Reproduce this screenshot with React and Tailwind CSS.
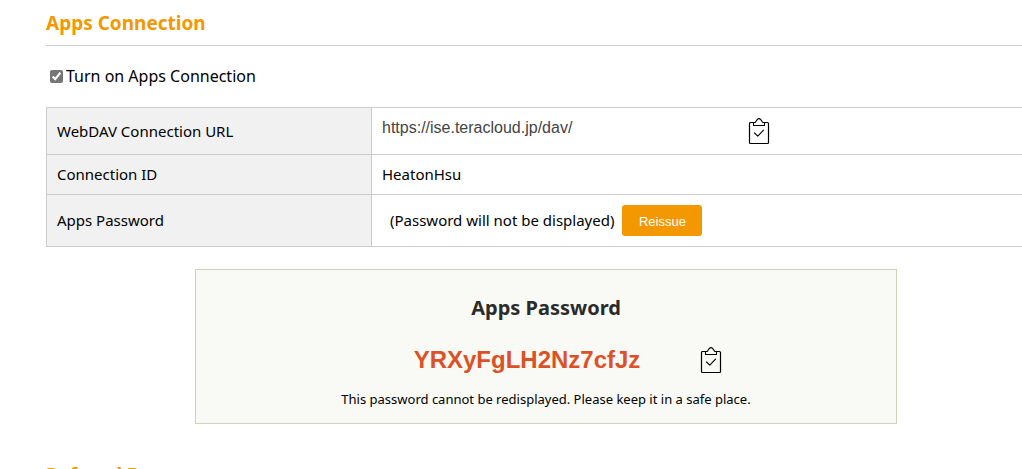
import { useState } from 'react';

function ClipboardIcon() {
  return (
    <svg width="22" height="28" viewBox="0 0 22 28" fill="none" stroke="#000" strokeLinejoin="round" strokeLinecap="round" aria-hidden="true">
      <path d="M5.5 5.5H2.5a1 1 0 0 0-1 1v19a1 1 0 0 0 1 1h17a1 1 0 0 0 1-1v-19a1 1 0 0 0-1-1h-3" strokeWidth="1.2" />
      <path d="M5.5 5.5v3h11v-3h-1.700L12.600 2.400C11.600 1.300 10.400 1.300 9.400 2.400L7.200 5.500z" strokeWidth="1.100" />
      <path d="M6.500 16l3.300 3.200 5.700-6" strokeWidth="1.100" />
    </svg>
  );
}

function CopyButton({ label, value }) {
  return (
    <button type="button" aria-label={label} className="shrink-0 cursor-pointer" onClick={() => navigator.clipboard?.writeText(value)}>
      <ClipboardIcon />
    </button>
  );
}

function SectionTitle({ children }) {
  return <h2 className="border-b border-[#ccc] pb-2 text-[19px] leading-7 font-bold text-[#f39800]">{children}</h2>;
}

function Row({ label, children, className }) {
  return (
    <tr className={className}>
      <th scope="row" className="w-[325px] border border-[#ccc] bg-[#f1f1f1] px-2.5 text-left font-normal">{label}</th>
      <td className="border border-[#ccc] px-2.5">{children}</td>
    </tr>
  );
}

export default function App() {
  const [enabled, setEnabled] = useState(true);
  const url = 'https://ise.teracloud.jp/dav/';
  const password = 'YRXyFgLH2Nz7cfJz';

  return (
    <main className="h-screen overflow-hidden bg-white font-['Noto_Sans','Open_Sans',sans-serif] text-[15px] text-black">
      <div className="-mr-6 ml-[46px] pt-[9px]">
        <SectionTitle>Apps Connection</SectionTitle>

        <label className="mt-[18px] flex h-6 items-center gap-[3px] pl-1 text-base">
          <input type="checkbox" checked={enabled} onChange={(e) => setEnabled(e.target.checked)} className="size-[13px] accent-[#767676]" />
          Turn on Apps Connection
        </label>

        <table className="mt-[19px] w-full border-collapse">
          <tbody>
            <Row label="WebDAV Connection URL" className="h-[47px]">
              <div className="flex items-center">
                <input
                  readOnly
                  aria-label="WebDAV Connection URL"
                  value={url}
                  className="w-[366px] pb-1.5 font-['Liberation_Sans',Arial,sans-serif] text-base leading-6 text-[#444] outline-none"
                />
                <CopyButton label="Copy connection URL" value={url} />
              </div>
            </Row>
            <Row label="Connection ID" className="h-10">HeatonHsu</Row>
            <Row label="Apps Password" className="h-[52px]">
              <div className="flex items-center gap-2 pl-2">
                <span>(Password will not be displayed)</span>
                <button type="button" className="h-[31px] w-20 cursor-pointer rounded-[3px] bg-[#f39800] pt-0.5 font-['Liberation_Sans',Arial,sans-serif] text-[13px] text-white">
                  Reissue
                </button>
              </div>
            </Row>
          </tbody>
        </table>

        <section className="mx-auto mt-[22px] w-[702px] border border-[#d2d2b9] bg-[#f9faf5] pt-6 pb-3 text-center">
          <h3 className="text-xl leading-7 font-bold text-[#2b2b2b]">Apps Password</h3>
          <div className="mt-6 flex items-center justify-center pr-4">
            <input
              readOnly
              aria-label="Apps Password"
              value={password}
              className="w-[346px] text-center font-['Liberation_Sans',Arial,sans-serif] text-2xl leading-7 font-bold text-[#dd5126] outline-none"
            />
            <CopyButton label="Copy apps password" value={password} />
          </div>
          <p className="mt-[13px] text-[13px] leading-6">This password cannot be redisplayed. Please keep it in a safe place.</p>
        </section>

        <div className="mt-[37px]">
          <SectionTitle>Referral Bonus</SectionTitle>
        </div>
      </div>
    </main>
  );
}
